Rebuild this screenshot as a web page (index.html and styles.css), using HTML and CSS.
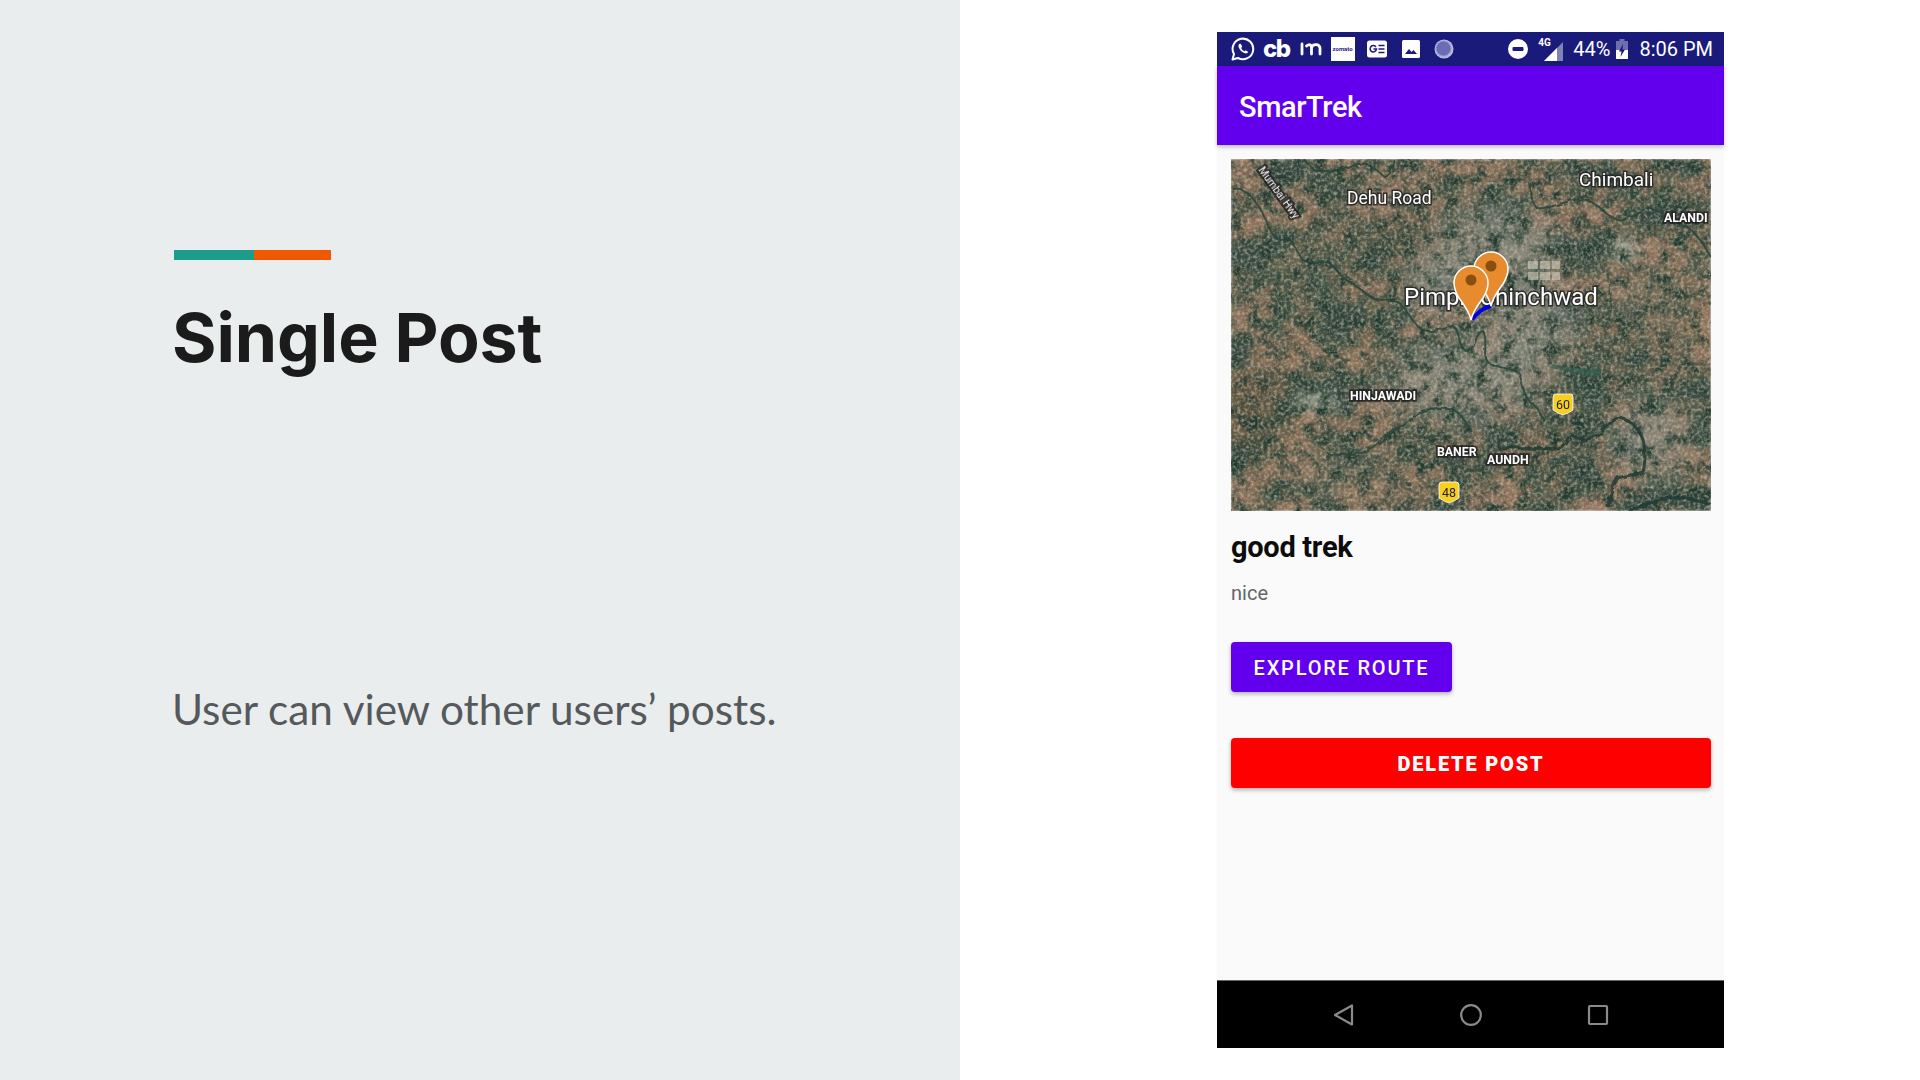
FILE: index.html
```html
<!DOCTYPE html>
<html lang="en">
<head>
  <meta charset="UTF-8">
  <title>Single Post | SmarTrek</title>
  <link rel="stylesheet" href="styles.css">
</head>
<body>

<div class="slide-left">
  <div class="accent">
    <span class="accent-teal"></span>
    <span class="accent-orange"></span>
  </div>
  <h1>Single Post</h1>
  <p class="slide-text">User can view other users’ posts.</p>
</div>

<div class="slide-right">
  <div class="phone">

    <!-- status bar -->
    <div class="status-bar">
      <div class="status-icons">
        <svg class="icon-whatsapp" width="24" height="24" viewBox="0 0 24 24">
          <path d="M1.5 22.5l1.5-5.4a10.3 10.3 0 1 1 4 3.9z" fill="none" stroke="#fff" stroke-width="2" stroke-linejoin="round"/>
          <path d="M8.6 6.7c-1 .7-1.4 1.9-1 3.300 1 3 3.300 5.300 6.300 6.300 1.400.4 2.700 0 3.400-1.200l-2.500-1.900-1.300 1c-1.500-.7-2.700-1.900-3.300-3.300l1-1.300-1.500-2.900z" fill="#fff"/>
        </svg>
        <span class="status-cb">cb</span>
        <svg class="icon-m" width="22" height="16" viewBox="0 0 22 16">
          <path d="M2 3v10M6.500 5c3.500-2.500 5-1 5 2v6M11.500 7c0-3.500 7.500-5.500 8.500 0v6" fill="none" stroke="#fff" stroke-width="2.800" stroke-linecap="round"/>
        </svg>
        <span class="status-zomato">zomato</span>
        <svg class="icon-news" width="20" height="18" viewBox="0 0 20 18">
          <rect width="20" height="17" y="0.500" rx="2.500" fill="#fff"/>
          <path d="M9 7a3.200 3.200 0 1 0 .5 2H6.500" fill="none" stroke="#1a1a7a" stroke-width="1.500"/>
          <path d="M11.500 5.500h6M11.500 9h6M11.500 12.500h6" stroke="#1a1a7a" stroke-width="1.500"/>
        </svg>
        <svg class="icon-photo" width="18" height="18" viewBox="0 0 18 18">
          <rect width="18" height="18" rx="1.500" fill="#fff"/>
          <path d="M3 14l4-5 2.500 3 2-2 3.500 4z" fill="#1a1a7a"/>
        </svg>
        <svg class="icon-moon" width="20" height="20" viewBox="0 0 20 20">
          <circle cx="10" cy="10" r="9.500" fill="#b9bbdc"/>
          <circle cx="9.500" cy="9.500" r="7.500" fill="#6a6db5" stroke="#9a9cd0" stroke-width="1.500" stroke-dasharray="1.500 1"/>
        </svg>
      </div>
      <div class="status-right">
        <svg class="icon-dnd" width="20" height="20" viewBox="0 0 20 20">
          <circle cx="10" cy="10" r="10" fill="#fff"/>
          <rect x="4.500" y="8" width="11" height="4" rx="1" fill="#1a1a7a"/>
        </svg>
        <div class="signal">
          <span class="signal-type">4G</span>
          <svg width="19" height="19" viewBox="0 0 19 19">
            <path d="M19 0v19H0z" fill="#7f82b8"/>
            <path d="M13 6v13H0z" fill="#fff"/>
          </svg>
        </div>
        <span class="status-text">44%</span>
        <svg class="icon-battery" width="12" height="20" viewBox="0 0 12 20">
          <path d="M3.500 0h5v2H12v18H0V2h3.500z" fill="#6d70ad"/>
          <path d="M0 11h12v9H0z" fill="#fff"/>
          <path d="M7 5l-4 7.500h2.500L4.500 18 9 10.500H6.500z" fill="#1a1a7a"/>
        </svg>
        <span class="status-text">8:06 PM</span>
      </div>
    </div>

    <div class="app-bar">SmarTrek</div>

    <div class="content">

      <!-- map preview -->
      <svg class="map" width="480" height="352" viewBox="0 0 480 352">
        <defs>
          <filter id="terrain" x="0" y="0" width="100%" height="100%" color-interpolation-filters="sRGB">
            <feTurbulence type="fractalNoise" baseFrequency="0.024 0.028" numOctaves="6" seed="11"/>
            <feColorMatrix type="matrix" values="2.600 0 0 0 -0.800  2.600 0 0 0 -0.800  2.600 0 0 0 -0.800  0 0 0 0 1"/>
            <feComponentTransfer>
              <feFuncR type="table" tableValues="0.22 0.27 0.35 0.44 0.51 0.56"/>
              <feFuncG type="table" tableValues="0.29 0.32 0.36 0.39 0.42 0.45"/>
              <feFuncB type="table" tableValues="0.26 0.27 0.29 0.31 0.33 0.36"/>
            </feComponentTransfer>
            <feGaussianBlur stdDeviation="0.8"/>
          </filter>
          <filter id="speckle" x="0" y="0" width="100%" height="100%" color-interpolation-filters="sRGB">
            <feTurbulence type="fractalNoise" baseFrequency="0.3" numOctaves="2" seed="4"/>
            <feColorMatrix type="matrix" values="0 0 0 0 0.8  0 0 0 0 0.78  0 0 0 0 0.7  1.500 0 0 0 -0.620"/>
            <feGaussianBlur stdDeviation="0.5"/>
          </filter>
          <filter id="speckle-dark" x="0" y="0" width="100%" height="100%" color-interpolation-filters="sRGB">
            <feTurbulence type="fractalNoise" baseFrequency="0.07" numOctaves="4" seed="21"/>
            <feColorMatrix type="matrix" values="0 0 0 0 0.14  0 0 0 0 0.23  0 0 0 0 0.19  3 0 0 0 -1.300"/>
            <feGaussianBlur stdDeviation="0.7"/>
          </filter>
          <filter id="blur-lg"><feGaussianBlur stdDeviation="16"/></filter>
          <filter id="blur-md"><feGaussianBlur stdDeviation="6"/></filter>
          <filter id="wobble" x="-5%" y="-5%" width="110%" height="110%">
            <feTurbulence type="fractalNoise" baseFrequency="0.09" numOctaves="2" seed="7" result="n"/>
            <feDisplacementMap in="SourceGraphic" in2="n" scale="5"/>
            <feGaussianBlur stdDeviation="0.4"/>
          </filter>
        </defs>

        <rect width="480" height="352" filter="url(#terrain)"/>

        <g filter="url(#blur-lg)">
          <ellipse class="urban" cx="235" cy="222" rx="82" ry="38"/>
          <ellipse class="urban" cx="265" cy="90" rx="60" ry="42"/>
          <ellipse class="urban" cx="300" cy="165" rx="46" ry="40"/>
          <ellipse class="urban" cx="420" cy="280" rx="36" ry="40"/>
          <ellipse class="urban" cx="205" cy="125" rx="30" ry="34"/>
          <ellipse class="hill" cx="18" cy="255" rx="26" ry="34"/>
          <ellipse class="hill" cx="175" cy="80" rx="24" ry="16"/>
          <ellipse class="green" cx="70" cy="110" rx="36" ry="36"/>
          <ellipse class="green" cx="350" cy="220" rx="24" ry="40"/>
          <ellipse class="brown" cx="150" cy="30" rx="36" ry="18"/>
          <ellipse class="brown" cx="420" cy="130" rx="50" ry="34"/>
          <ellipse class="brown" cx="110" cy="320" rx="50" ry="26"/>
        </g>
        <g filter="url(#blur-md)">
          <ellipse class="pale" cx="85" cy="243" rx="22" ry="9"/>
          <ellipse class="pale" cx="394" cy="90" rx="14" ry="12"/>
          <ellipse class="hill" cx="30" cy="225" rx="34" ry="5"/>
        </g>

        <rect width="480" height="352" filter="url(#speckle-dark)"/>
        <rect width="480" height="352" filter="url(#speckle)"/>

        <!-- campus blocks -->
        <path class="blocks" d="M297 102h10v8h-10zM309 102h10v8h-10zM321 102h8v8h-8zM297 113h10v8h-10zM309 113h10v8h-10zM321 113h8v8h-8z"/>

        <g class="rivers" filter="url(#wobble)">
          <path d="M2 30C18 26 30 50 43 77c5 6 12 0 15 3 8 8 10 20 17 23 10 4 15-3 22 0 8 4 12 16 20 19 10 5 16 12 26 18 8 4 14 0 24 3 10 8 12 18 22 26 8 6 22 2 33-2 8 4 4 22 14 25 10-2 8-20 16-20 6 8-2 26 6 32 10 6 22 4 30 10 4 10 4 24 12 30 8 4 6 8 14 18"/>
          <path d="M73 0c6 8 10 12 17 13 16 2 30-10 43-8 8 1 14 8 20 12 6-2 8-10 10-17"/>
          <path d="M299 24c2 10 0 18 7 25 16 2 34-12 50-8 12 3 18 16 30 20 12 2 24-12 36-10 12 2 22 14 34 17 10 6 18 20 24 30"/>
          <path d="M96 294c12 4 28 1 40-3 18-8 34-28 53-37 10-3 22-6 33-3 8 3 14 14 20 23"/>
          <path class="river-wide" d="M267 289c20-2 46 3 63-1 4-3 6-8 10-12 6 2 10 6 17 5 6-2 12-7 16-12 4-5 8-10 14-11 6 0 12 5 16 8 5 6 10 14 10 20 1 9 2 18-1 27-8 3-18 3-25 6-6 8-9 20-10 30"/>
          <path class="river-wide" d="M397 352c14-6 28-11 43-13 14-1 28 3 40 7"/>
          <path class="river-thin" d="M292 300c6 10-4 24 4 40M380 120c-6 14 4 26-2 42M345 230c14-4 28 2 40 0"/>
        </g>
        <path class="tank" d="M322 205c10 3 30 5 48 6l-4 6c-14-2-34-5-48-8z"/>

        <!-- labels -->
        <text class="map-label" x="348" y="27">Chimbali</text>
        <text class="map-label map-label-mid" x="116" y="45">Dehu Road</text>
        <text class="map-label map-label-big" x="173" y="146">Pimpri Chinchwad</text>
        <text class="map-label map-label-caps" x="433" y="63">ALANDI</text>
        <text class="map-label map-label-caps" x="119" y="241">HINJAWADI</text>
        <text class="map-label map-label-caps" x="206" y="297">BANER</text>
        <text class="map-label map-label-caps" x="256" y="305">AUNDH</text>
        <text class="map-label map-label-road" transform="translate(27 11) rotate(54)">Mumbai Hwy</text>

        <path class="shield" d="M325 235h14a3 3 0 0 1 3 3v13l-5 3-5 2-5-2-5-3v-13a3 3 0 0 1 3-3z"/>
        <text class="shield-text" x="332" y="250">60</text>
        <path class="shield" d="M211 323h14a3 3 0 0 1 3 3v13l-5 3-5 2-5-2-5-3v-13a3 3 0 0 1 3-3z"/>
        <text class="shield-text" x="218" y="338">48</text>

        <!-- route and markers -->
        <path class="route" d="M241 160c6-6 10-11 19-13"/>
        <g class="marker">
          <path d="M260 147c-2-9-7-15-12-22-3-5-5-9-5-15a17 17 0 0 1 34 0c0 6-2 10-5 15-5 7-10 13-12 22z"/>
          <circle cx="260" cy="107" r="5.500"/>
        </g>
        <g class="marker">
          <path d="M240 161c-2-9-7-15-12-22-3-5-5-9-5-15a17 17 0 0 1 34 0c0 6-2 10-5 15-5 7-10 13-12 22z"/>
          <circle cx="240" cy="121" r="5.500"/>
        </g>
      </svg>

      <div class="post-title">good trek</div>
      <div class="post-text">nice</div>
      <button class="btn btn-explore">Explore Route</button>
      <button class="btn btn-delete">Delete Post</button>
    </div>

    <!-- android nav -->
    <div class="nav-bar">
      <svg width="22" height="24" viewBox="0 0 22 24">
        <path d="M19 2.500v19L2 12z" fill="none" stroke="#8a8a8a" stroke-width="2.200" stroke-linejoin="round"/>
      </svg>
      <svg width="24" height="24" viewBox="0 0 24 24">
        <circle cx="12" cy="12" r="9.800" fill="none" stroke="#8a8a8a" stroke-width="2.200"/>
      </svg>
      <svg width="22" height="22" viewBox="0 0 22 22">
        <rect x="2" y="2" width="18" height="18" rx="1" fill="none" stroke="#8a8a8a" stroke-width="2.200"/>
      </svg>
    </div>

  </div>
</div>

</body>
</html>
```

FILE: styles.css
```css
* {
  box-sizing: border-box;
}
body {
  margin: 0;
  height: 1080px;
  overflow: hidden;
  display: flex;
  background: #fff;
  font-family: Roboto, "Liberation Sans", sans-serif;
}

/* left half of the slide */
.slide-left {
  width: 960px;
  height: 1080px;
  background: #e9edee;
  padding: 250px 0 0 172px;
}
.accent {
  display: flex;
  width: 157px;
  height: 10px;
  margin-left: 2px;
}
.accent-teal {
  width: 80px;
  background: #1c9c8b;
}
.accent-orange {
  flex: 1;
  background: #ef5a00;
}
h1 {
  margin: 35px 0 0;
  font-family: Inter, Lato, sans-serif;
  font-size: 68px;
  line-height: 84px;
  font-weight: 700;
  letter-spacing: -0.100px;
  color: #1b1b1b;
}
.slide-text {
  margin: 304px 0 0;
  font-family: Lato, sans-serif;
  font-size: 42.300px;
  line-height: 52px;
  color: #55595b;
}

/* phone screenshot */
.slide-right {
  flex: 1;
  padding: 32px 0 0 257px;
}
.phone {
  width: 507px;
  height: 1016px;
  display: flex;
  flex-direction: column;
  background: #fafafa;
}
.status-bar {
  height: 34px;
  flex-shrink: 0;
  background: #1a1a7a;
  color: #fff;
  display: flex;
  align-items: center;
  justify-content: space-between;
  padding: 0 11px 0 14px;
}
.status-icons,
.status-right {
  display: flex;
  align-items: center;
}
.status-cb {
  margin-left: 8px;
  font-family: Inter, Roboto, sans-serif;
  font-size: 24px;
  line-height: 30px;
  font-weight: 800;
  letter-spacing: -1.500px;
}
.icon-m {
  margin-left: 10px;
}
.status-zomato {
  width: 24px;
  height: 24px;
  margin-left: 9px;
  background: #fff;
  color: #1a1a7a;
  font-size: 6px;
  font-weight: 700;
  line-height: 24px;
  text-align: center;
}
.icon-news {
  margin-left: 12px;
}
.icon-photo {
  margin-left: 15px;
}
.icon-moon {
  margin-left: 14px;
}
.signal {
  display: flex;
  align-items: flex-end;
  margin-left: 11px;
  margin-right: 10px;
  width: 24px;
  height: 24px;
  position: relative;
  justify-content: flex-end;
}
.signal-type {
  position: absolute;
  left: -1px;
  top: 0;
  font-size: 10px;
  line-height: 11px;
  font-weight: 700;
}
.status-text {
  font-size: 20px;
  line-height: 24px;
}
.icon-battery {
  margin: 0 11px 0 6px;
}
.app-bar {
  height: 79px;
  flex-shrink: 0;
  background: #6200ee;
  color: #fff;
  font-size: 29px;
  font-weight: 500;
  line-height: 79px;
  padding: 2px 0 0 22px;
  letter-spacing: -0.400px;
  box-shadow: 0 2px 4px rgba(0, 0, 0, 0.25);
  position: relative;
}
.content {
  flex: 1;
  padding: 14px 14px 0;
  display: flex;
  flex-direction: column;
  align-items: flex-start;
}
.map {
  display: block;
  flex-shrink: 0;
}
.post-title {
  margin-top: 19px;
  font-size: 29px;
  line-height: 34px;
  font-weight: 700;
  letter-spacing: -0.300px;
  color: #0c0c0c;
}
.post-text {
  margin-top: 17px;
  font-size: 20px;
  line-height: 24px;
  color: #666;
}
.btn {
  height: 50px;
  border: none;
  border-radius: 4px;
  padding: 2px 0 0;
  color: #fff;
  font-family: Roboto, sans-serif;
  font-size: 20px;
  font-weight: 500;
  letter-spacing: 1.800px;
  text-transform: uppercase;
  box-shadow: 0 2px 4px rgba(0, 0, 0, 0.3);
}
.btn-explore {
  width: 221px;
  margin-top: 37px;
  background: #6200ee;
}
.btn-delete {
  width: 480px;
  margin-top: 46px;
  background: #f00;
  font-weight: 900;
}
.nav-bar {
  height: 68px;
  flex-shrink: 0;
  background: #000;
  border-top: 1px solid #666;
  display: flex;
  align-items: center;
  justify-content: center;
  gap: 104px;
}

/* map bits */
.urban { fill: #8a897e; opacity: 0.8; }
.hill { fill: #4d4a36; opacity: 0.85; }
.green { fill: #3b5344; opacity: 0.55; }
.brown { fill: #8f7a62; opacity: 0.5; }
.pale { fill: #c9c7b6; opacity: 0.7; }
.blocks { fill: #d8d2bf; opacity: 0.55; }
.tank { fill: #2f5f50; opacity: 0.6; }
.rivers path {
  fill: none;
  stroke: #27453b;
  stroke-width: 2;
  opacity: 0.85;
}
.rivers .river-wide {
  stroke: #1d3a33;
  stroke-width: 3;
}
.rivers .river-thin {
  stroke-width: 1.500;
  opacity: 0.6;
}
.map-label {
  font-family: Roboto, sans-serif;
  font-size: 19px;
  fill: #fff;
  stroke: #222;
  stroke-width: 3px;
  stroke-opacity: 0.85;
  paint-order: stroke;
}
.map-label-mid {
  font-size: 17.500px;
}
.map-label-big {
  font-size: 24px;
}
.map-label-caps {
  font-size: 12.300px;
  font-weight: 700;
  stroke-width: 3.500px;
}
.map-label-road {
  font-size: 10.500px;
  stroke-width: 4px;
}
.shield {
  fill: #f6cf20;
  stroke: #fff;
  stroke-width: 0.800;
}
.shield-text {
  font-family: Roboto, sans-serif;
  font-size: 12.500px;
  fill: #222;
  text-anchor: middle;
}
.route {
  fill: none;
  stroke: #0000e6;
  stroke-width: 4;
}
.marker path {
  fill: #e88b2e;
  stroke: #fff;
  stroke-width: 1.500;
}
.marker circle {
  fill: #8a4e10;
}
```
